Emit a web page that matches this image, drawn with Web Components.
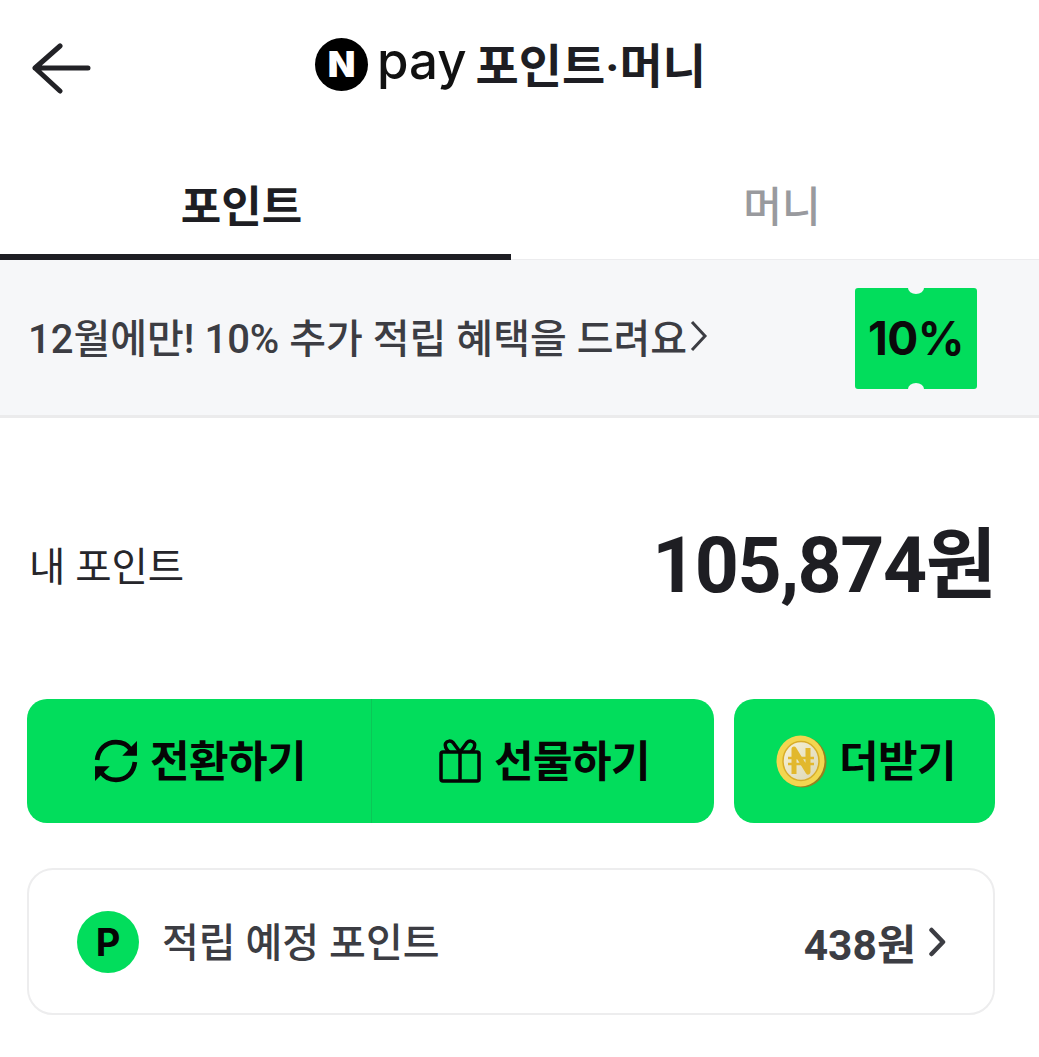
<!DOCTYPE html>
<html lang="ko">
<head>
<meta charset="utf-8">
<title>네이버페이 포인트·머니</title>
<style>
    html, body { margin: 0; padding: 0; background: #fff; }
    body { font-family: Roboto, "Noto Sans CJK KR", sans-serif; color: #1e1e23; height: 1057px; overflow: hidden; }
</style>
</head>
<body>
<pay-page></pay-page>

<script>
const fonts = `Roboto, "Noto Sans CJK KR", sans-serif`;

class PayHeader extends HTMLElement {
    connectedCallback() {
        this.attachShadow({ mode: "open" }).innerHTML = `
        <style>
            :host { display: flex; height: 135px; align-items: center; }
            .back { position: absolute; left: 31px; top: 43px; }
            .title { display: flex; align-items: center; margin-left: 315px; margin-top: -6px; }
            .n { width: 53px; height: 53px; border-radius: 50%; background: #000; color: #fff;
                 font: 900 36px/53px Inter, Roboto, sans-serif; text-align: center; }
            .pay { font: 500 51px/53px Inter, sans-serif; margin-left: 9px; color: #111; position: relative; top: -4px; }
            .text { font: 700 47px/53px ${fonts}; margin-left: 9px; color: #1e1e23; position: relative; top: 2px; }
        </style>
        <svg class="back" width="62" height="52" viewBox="0 0 62 52" fill="none" stroke="#222226" stroke-width="5" stroke-linecap="round" stroke-linejoin="round">
            <path d="M57 25H4M29 3 4 25l25 23"/>
        </svg>
        <div class="title">
            <span class="n">N</span><span class="pay">pay</span><span class="text">포인트·머니</span>
        </div>`;
    }
}

class PayTabs extends HTMLElement {
    connectedCallback() {
        this.attachShadow({ mode: "open" }).innerHTML = `
        <style>
            :host { display: flex; height: 125px; font-family: ${fonts}; }
            div { box-sizing: border-box; padding-top: 44px; line-height: 58px; text-align: center; }
            .on { width: 511px; border-bottom: 6px solid #1e1e23; font-size: 44px; font-weight: 700; color: #1e1e23; padding-right: 28px; }
            .off { flex: 1; border-bottom: 1px solid #ececee; font-size: 42px; color: #999a9e; font-weight: 500; padding-left: 14px; }
        </style>
        <div class="on">포인트</div>
        <div class="off">머니</div>`;
    }
}

class PromoBanner extends HTMLElement {
    connectedCallback() {
        this.attachShadow({ mode: "open" }).innerHTML = `
        <style>
            :host { display: flex; box-sizing: border-box; height: 158px; align-items: center; justify-content: space-between;
                    background: #f6f7f9; border-bottom: 3px solid #ebebec; padding: 0 62px 0 28px; font-family: ${fonts}; }
            .msg { display: flex; align-items: center; gap: 3px; font-size: 40px; font-weight: 500; color: #3c3d43; margin-top: -4px; }
            .ticket { position: relative; width: 122px; height: 101px; margin-top: 1px; }
            .ticket svg { position: absolute; inset: 0; }
            .ticket span { position: relative; display: block; text-align: center; font: 700 46px/101px Inter, ${fonts}; color: #0a0a0a; letter-spacing: -.5px; }
        </style>
        <div class="msg"><span>12월에만! 10% 추가 적립 혜택을 드려요</span>
            <svg width="18" height="32" viewBox="0 0 18 32" fill="none" stroke="#3c3d43" stroke-width="3"><path d="M2 2l13 14L2 30"/></svg>
        </div>
        <div class="ticket">
            <svg width="122" height="101" viewBox="0 0 122 101"><path fill="#02dd5c" d="M3 0H53a8 6 0 0 0 16 0H119a3 3 0 0 1 3 3V98a3 3 0 0 1-3 3H69a8 6 0 0 0-16 0H3a3 3 0 0 1-3-3V3a3 3 0 0 1 3-3z"/></svg>
            <span>10%</span>
        </div>`;
    }
}

class PointBalance extends HTMLElement {
    connectedCallback() {
        this.attachShadow({ mode: "open" }).innerHTML = `
        <style>
            :host { display: flex; height: 281px; box-sizing: border-box; padding: 0 44px 0 30px; align-items: center; justify-content: space-between; font-family: ${fonts}; }
            .label { font-size: 39.500px; color: #26262b; margin-top: 10px; margin-left: -1px; }
            .amount { font-size: 77px; font-weight: 700; color: #1e1e23; letter-spacing: -1.500px; }
        </style>
        <span class="label">내 포인트</span>
        <span class="amount">105,874원</span>`;
    }
}

class ActionButton extends HTMLElement {
    connectedCallback() {
        this.attachShadow({ mode: "open" }).innerHTML = `
        <style>
            :host { display: flex; flex: 1; box-sizing: border-box; align-items: center; justify-content: center; gap: 12px; height: 124px; padding-left: 2px;
                    font: 700 43px/1 ${fonts}; color: #050505; letter-spacing: -.5px; }
            ::slotted(svg) { flex: none; }
            .label { position: relative; top: 1px; }
        </style>
        <slot name="icon"></slot><span class="label"><slot></slot></span>`;
    }
}

class ActionBar extends HTMLElement {
    connectedCallback() {
        this.attachShadow({ mode: "open" }).innerHTML = `
        <style>
            :host { display: flex; gap: 20px; padding: 0 44px 0 27px; }
            .group { display: flex; width: 687px; background: #02dd5c; border-radius: 20px; }
            .group ::slotted(action-button:first-child) { flex: none; width: 345px; border-right: 1px solid #0bc657; }
            .single { display: flex; flex: 1; background: #02dd5c; border-radius: 20px; }
        </style>
        <div class="group"><slot name="pair"></slot></div>
        <div class="single"><slot name="more"></slot></div>`;
    }
}

class PendingCard extends HTMLElement {
    connectedCallback() {
        this.attachShadow({ mode: "open" }).innerHTML = `
        <style>
            :host { display: flex; box-sizing: border-box; height: 147px; margin: 45px 44px 0 27px; padding: 0 47px 0 48px; align-items: center;
                    border: 2px solid #ededee; border-radius: 26px; font-family: ${fonts}; color: #3c3d43; }
            .p { width: 62px; height: 62px; border-radius: 50%; background: #02dd5c; color: #050505; text-align: center;
                 font: 700 38px/62px Inter, Roboto, sans-serif; }
            .name { font-size: 40px; font-weight: 500; margin-left: 23px; flex: 1; margin-top: -4px; }
            .value { font-size: 42.500px; font-weight: 700; }
            svg { margin-left: 13px; }
        </style>
        <span class="p">P</span>
        <span class="name">적립 예정 포인트</span>
        <span class="value">438원</span>
        <svg width="17" height="30" viewBox="0 0 17 30" fill="none" stroke="#3c3d43" stroke-width="4.500" stroke-linecap="round" stroke-linejoin="round"><path d="M2.500 3 14 15 2.500 27"/></svg>`;
    }
}

class PayPage extends HTMLElement {
    connectedCallback() {
        this.attachShadow({ mode: "open" }).innerHTML = `
        <style>:host { display: block; position: relative; }</style>
        <pay-header></pay-header>
        <pay-tabs></pay-tabs>
        <promo-banner></promo-banner>
        <point-balance></point-balance>
        <action-bar>
            <action-button slot="pair">
                <svg slot="icon" width="44" height="44" viewBox="1 1 42 42" fill="none" stroke="#050505" stroke-width="4.500">
                    <path d="M4 21C5 11 12 4 22 4c6 0 11 2.500 14 7"/><path d="M40 23c-1 10-8 17-18 17-6 0-11-2.500-14-7"/>
                    <path fill="#050505" stroke="none" d="M42 3v14H28zM2 41V27h14z"/>
                </svg>
                전환하기
            </action-button>
            <action-button slot="pair">
                <svg slot="icon" width="44" height="44" viewBox="0 0 44 44" fill="none" stroke="#050505" stroke-width="3.500" stroke-linejoin="round">
                    <path d="M3 15a2 2 0 0 1 2-2h34a2 2 0 0 1 2 2v25a2 2 0 0 1-2 2H5a2 2 0 0 1-2-2zM22 13v29"/>
                    <path d="M22 13 15 3.500c-2-2-6-2-7.500 1-1 3 1 6 3.500 8.500M22 13l7-9.500c2-2 6-2 7.500 1 1 3-1 6-3.500 8.500"/>
                </svg>
                선물하기
            </action-button>
            <action-button slot="more">
                <svg slot="icon" width="52" height="54" viewBox="0 0 52 54">
                    <defs>
                        <linearGradient id="face" x1="0" y1="0" x2="1" y2="1">
                            <stop offset="0" stop-color="#f7f2d8"/><stop offset="1" stop-color="#dcd6b4"/>
                        </linearGradient>
                    </defs>
                    <ellipse cx="27.500" cy="28" rx="24" ry="25.500" fill="#98801f"/>
                    <ellipse cx="25.500" cy="27" rx="24" ry="25.500" fill="#f3d650"/>
                    <ellipse cx="26" cy="27" rx="18" ry="19.500" fill="url(#face)" stroke="#d8ad2a" stroke-width="1.500"/>
                    <path d="M19 40V15l14 23V14" fill="none" stroke="#e2b82d" stroke-width="5" stroke-linejoin="round"/>
                    <path d="M13 24h26M13 30h26" fill="none" stroke="#e2b82d" stroke-width="2.500"/>
                </svg>
                더받기
            </action-button>
        </action-bar>
        <pending-card></pending-card>`;
    }
}

customElements.define("pay-header", PayHeader);
customElements.define("pay-tabs", PayTabs);
customElements.define("promo-banner", PromoBanner);
customElements.define("point-balance", PointBalance);
customElements.define("action-button", ActionButton);
customElements.define("action-bar", ActionBar);
customElements.define("pending-card", PendingCard);
customElements.define("pay-page", PayPage);
</script>
</body>
</html>
